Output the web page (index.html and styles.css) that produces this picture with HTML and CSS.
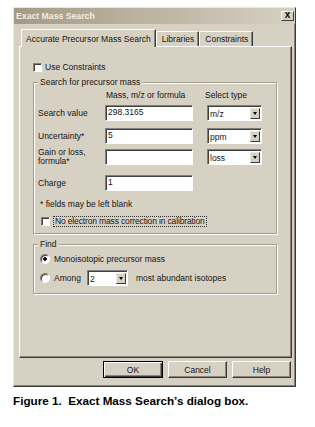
FILE: index.html
```html
<!doctype html>
<html>
<head>
    <meta charset="UTF-8">
    <link rel="stylesheet" href="styles.css">
</head>
<body>
    <div class="dialog">
        <div class="titlebar">
            <span class="title">Exact Mass Search</span>
            <span class="close">x</span>
        </div>
        <div class="dialog-body">
            <ul class="tabs">
                <li class="tab active">Accurate Precursor Mass Search</li>
                <li class="tab">Libraries</li>
                <li class="tab">Constraints</li>
            </ul>
            <div class="panel">
                <div class="check-row">
                    <span class="checkbox"></span>
                    <span>Use Constraints</span>
                </div>

                <fieldset class="group">
                    <legend>Search for precursor mass</legend>
                    <div class="row head">
                        <span class="lbl"></span>
                        <span class="col-input">Mass, m/z or formula</span>
                        <span class="col-type">Select type</span>
                    </div>
                    <div class="row row-search">
                        <span class="lbl">Search value</span>
                        <span class="field">298.3165</span>
                        <span class="select"><span class="sel-text">m/z</span><span class="arrow"></span></span>
                    </div>
                    <div class="row row-unc">
                        <span class="lbl">Uncertainty*</span>
                        <span class="field">5</span>
                        <span class="select"><span class="sel-text">ppm</span><span class="arrow"></span></span>
                    </div>
                    <div class="row row-gain">
                        <span class="lbl two-line">Gain or loss,<br>formula*</span>
                        <span class="field"></span>
                        <span class="select"><span class="sel-text">loss</span><span class="arrow"></span></span>
                    </div>
                    <div class="row row-charge">
                        <span class="lbl">Charge</span>
                        <span class="field">1</span>
                    </div>
                    <div class="note">* fields may be left blank</div>
                    <div class="check-row inner">
                        <span class="checkbox"></span>
                        <span class="focus">No electron mass correction in calibration</span>
                    </div>
                </fieldset>

                <fieldset class="group find">
                    <legend>Find</legend>
                    <div class="opt opt-mono">
                        <span class="radio checked"></span>
                        <span>Monoisotopic precursor mass</span>
                    </div>
                    <div class="opt opt-among">
                        <span class="radio"></span>
                        <span>Among</span>
                        <span class="select small"><span class="sel-text">2</span><span class="arrow"></span></span>
                        <span class="after">most abundant isotopes</span>
                    </div>
                </fieldset>
            </div>
            <div class="buttons">
                <span class="btn default">OK</span>
                <span class="btn">Cancel</span>
                <span class="btn">Help</span>
            </div>
        </div>
    </div>
    <p class="caption">Figure 1.&nbsp; Exact Mass Search’s dialog box.</p>
</body>
</html>
```

FILE: styles.css
```css
* {
    box-sizing: border-box;
}
body {
    margin: 0;
    padding: 7px 0 0 13px;
    background-color: #fff;
    font-family: "Liberation Sans", Arial, sans-serif;
    font-size: 8.5px;
    color: #151515;
}

.dialog {
    width: 283px;
    height: 380px;
    background-color: #d7d1c4;
    border: 1px solid;
    border-color: #ebe7de #3a3a3a #3a3a3a #ebe7de;
    box-shadow: inset -1px -1px #8a8578;
    display: flex;
    flex-direction: column;
}

.titlebar {
    height: 16px;
    display: flex;
    align-items: center;
    justify-content: space-between;
    padding: 0 1px 0 2px;
    background: linear-gradient(90deg, #a49a85 0%, #b8af9c 40%, #d6d0c2 100%);
}
.title {
    color: #f1ede4;
    font-weight: bold;
    font-size: 8.7px;
}
.close {
    width: 13px;
    height: 10px;
    background-color: #d7d1c4;
    border: 1px solid;
    border-color: #fff #404040 #404040 #fff;
    font-size: 10px;
    font-weight: bold;
    line-height: 6px;
    text-align: center;
    color: #000;
}

.dialog-body {
    flex: 1;
    display: flex;
    flex-direction: column;
    padding: 5px 3px 0 5px;
}

.tabs {
    list-style: none;
    margin: 0;
    padding: 0 0 0 2px;
    display: flex;
    align-items: flex-end;
}
.tab {
    height: 15px;
    padding: 0 4px 0 5px;
    display: flex;
    align-items: center;
    border: 1px solid;
    border-bottom: none;
    border-color: #fff #3a3a3a #fff #fff;
    box-shadow: inset -1px 0 #8a8578;
}
.tab.active {
    height: 18px;
    margin-bottom: -1px;
    padding: 0 4px 0 4px;
    background-color: #d7d1c4;
    position: relative;
    z-index: 1;
}

.panel {
    height: 312px;
    border: 1px solid;
    border-color: #fff #3a3a3a #3a3a3a #fff;
    box-shadow: inset -1px -1px #8a8578;
    padding: 15px 14px 0 13px;
}

.check-row {
    display: flex;
    align-items: center;
    height: 10px;
}
.checkbox {
    width: 9px;
    height: 9px;
    margin-right: 3px;
    background-color: #fff;
    border: 1px solid;
    border-color: #808080 #fff #fff #808080;
    box-shadow: inset 1px 1px #404040;
    flex: none;
}

.group {
    margin: 5px 0 0;
    padding: 0 0 6px 4px;
    border: 1px solid #a29d91;
    box-shadow: inset 1px 1px #fff, 1px 1px #fff;
}
.group legend {
    padding: 0 2px;
    line-height: 10px;
    background-color: #d7d1c4;
}

.row {
    display: flex;
    align-items: center;
    height: 16px;
}
.row.head {
    height: 11px;
    margin-top: 2px;
}
.row-search { margin-top: 5px; }
.row-unc { margin-top: 7px; }
.row-gain { margin-top: 5px; }
.row-charge { margin-top: 10px; }

.lbl {
    width: 67px;
    flex: none;
}
.two-line {
    line-height: 9px;
}
.col-input {
    width: 88px;
    padding-left: 1px;
}
.col-type {
    margin-left: 12px;
}

.field {
    width: 88px;
    height: 16px;
    flex: none;
    background-color: #fff;
    border: 1px solid;
    border-color: #808080 #fff #fff #808080;
    box-shadow: inset 1px 1px #404040;
    padding: 1px 2px 0 2px;
    line-height: 11px;
}

.select {
    width: 55px;
    height: 16px;
    margin-left: 14px;
    flex: none;
    display: flex;
    background-color: #fff;
    border: 1px solid;
    border-color: #808080 #fff #fff #808080;
    box-shadow: inset 1px 1px #404040;
    padding: 2px 1px 1px 2px;
}
.sel-text {
    flex: 1;
    line-height: 12px;
}
.arrow {
    width: 10px;
    flex: none;
    display: flex;
    align-items: center;
    justify-content: center;
    background-color: #d7d1c4;
    border: 1px solid;
    border-color: #ebe7de #3a3a3a #3a3a3a #ebe7de;
}
.arrow::after {
    content: "";
    border-left: 2.5px solid transparent;
    border-right: 2.5px solid transparent;
    border-top: 3px solid #000;
}
.select.small {
    width: 41px;
    margin-left: 6px;
}

.note {
    margin-top: 8px;
    height: 10px;
    line-height: 10px;
    padding-left: 2px;
}
.check-row.inner {
    margin-top: 7px;
    height: 11px;
    padding-left: 3px;
}
.focus {
    border: 1px dotted #333;
    padding: 0 1px;
    line-height: 9px;
    white-space: nowrap;
    letter-spacing: -0.15px;
}

.group.find {
    margin-top: 5px;
    padding-bottom: 7px;
}
.opt {
    display: flex;
    align-items: center;
    padding-left: 2px;
}
.opt-mono {
    margin-top: 5px;
    height: 10px;
}
.opt-among {
    margin-top: 6px;
    height: 16px;
}
.radio {
    width: 10px;
    height: 10px;
    margin-right: 4px;
    border-radius: 50%;
    background-color: #fff;
    border: 1px solid;
    border-color: #808080 #fff #fff #808080;
    box-shadow: inset 1px 1px #404040;
    flex: none;
}
.radio.checked {
    background: radial-gradient(circle, #000 0 1.5px, #fff 2px);
}
.after {
    margin-left: 8px;
}

.buttons {
    display: flex;
    justify-content: flex-end;
    gap: 5px;
    margin-top: 3px;
    padding-right: 1px;
}
.btn {
    width: 59px;
    height: 17px;
    display: flex;
    align-items: center;
    justify-content: center;
    border: 1px solid;
    border-color: #fff #3a3a3a #3a3a3a #fff;
    box-shadow: inset -1px -1px #8a8578;
}
.btn.default {
    width: 60px;
    border-color: #000;
    box-shadow: inset 1px 1px #fff, inset -1px -1px #3a3a3a, inset -2px -2px #8a8578;
}

.caption {
    margin: 7px 0 0;
    font-size: 11.7px;
    font-weight: bold;
    line-height: 14px;
    color: #000;
}
```
